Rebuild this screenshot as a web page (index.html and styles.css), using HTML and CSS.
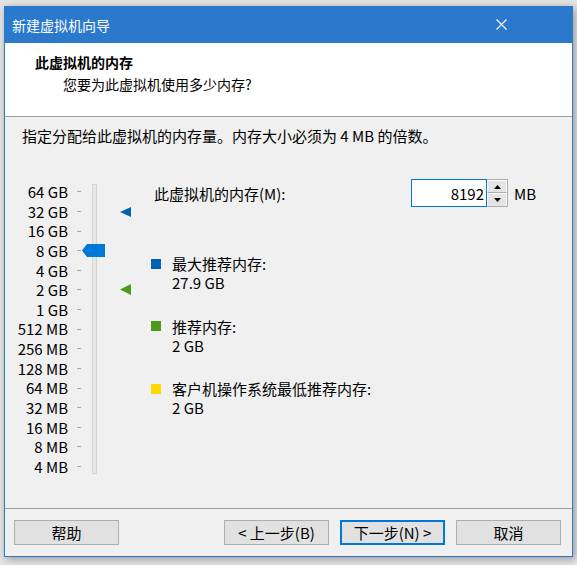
FILE: index.html
```html
<!DOCTYPE html>
<html lang="zh-CN">
<head>
  <meta charset="UTF-8">
  <title>新建虚拟机向导</title>
  <link rel="stylesheet" href="styles.css">
</head>
<body>
  <div class="window">
    <div class="titlebar">
      <span class="title">新建虚拟机向导</span>
      <svg class="close" width="11" height="11" viewBox="0 0 11 11">
        <path d="M0.5 0.5 L10.5 10.5 M10.5 0.5 L0.5 10.5" stroke="#fff" stroke-width="1.1" fill="none"/>
      </svg>
    </div>

    <div class="header">
      <div class="header-title">此虚拟机的内存</div>
      <div class="header-sub">您要为此虚拟机使用多少内存?</div>
    </div>

    <div class="content">
      <p class="intro">指定分配给此虚拟机的内存量。内存大小必须为 4 MB 的倍数。</p>

      <div class="main">
        <div class="scale">
          <ul class="scale-labels">
            <li><span>64 GB</span><i class="tick"></i></li>
            <li><span>32 GB</span><i class="tick"></i></li>
            <li><span>16 GB</span><i class="tick"></i></li>
            <li><span>8 GB</span><i class="tick"></i></li>
            <li><span>4 GB</span><i class="tick"></i></li>
            <li><span>2 GB</span><i class="tick"></i></li>
            <li><span>1 GB</span><i class="tick"></i></li>
            <li><span>512 MB</span><i class="tick"></i></li>
            <li><span>256 MB</span><i class="tick"></i></li>
            <li><span>128 MB</span><i class="tick"></i></li>
            <li><span>64 MB</span><i class="tick"></i></li>
            <li><span>32 MB</span><i class="tick"></i></li>
            <li><span>16 MB</span><i class="tick"></i></li>
            <li><span>8 MB</span><i class="tick"></i></li>
            <li><span>4 MB</span><i class="tick"></i></li>
          </ul>
          <div class="track"></div>
          <svg class="thumb" width="23" height="13" viewBox="0 0 23 13">
            <polygon points="0,6.5 5,0 23,0 23,13 5,13" fill="#0078d7"/>
          </svg>
          <svg class="marker marker-max" width="11" height="10" viewBox="0 0 11 10">
            <polygon points="0,5 11,0 11,10" fill="#0063b1"/>
          </svg>
          <svg class="marker marker-rec" width="11" height="11" viewBox="0 0 11 11">
            <polygon points="0,5.5 11,0 11,11" fill="#4c9a1c"/>
          </svg>
        </div>

        <div class="settings">
          <div class="mem-row">
            <label class="mem-label">此虚拟机的内存(M):</label>
            <div class="spin">
              <input class="spin-input" type="text" value="8192">
              <div class="spin-buttons">
                <button class="spin-btn"><svg width="7" height="4" viewBox="0 0 7 4"><polygon points="0,4 3.5,0 7,4" fill="#000"/></svg></button>
                <button class="spin-btn"><svg width="7" height="4" viewBox="0 0 7 4"><polygon points="0,0 7,0 3.5,4" fill="#000"/></svg></button>
              </div>
            </div>
            <span class="unit">MB</span>
          </div>

          <div class="legend">
            <div class="legend-item">
              <i class="swatch swatch-max"></i>
              <div>最大推荐内存:<br>27.9 GB</div>
            </div>
            <div class="legend-item">
              <i class="swatch swatch-rec"></i>
              <div>推荐内存:<br>2 GB</div>
            </div>
            <div class="legend-item">
              <i class="swatch swatch-min"></i>
              <div>客户机操作系统最低推荐内存:<br>2 GB</div>
            </div>
          </div>
        </div>
      </div>
    </div>

    <div class="footer">
      <button class="btn">帮助</button>
      <div class="nav">
        <button class="btn">&lt; 上一步(B)</button>
        <button class="btn btn-default">下一步(N) &gt;</button>
        <button class="btn">取消</button>
      </div>
    </div>
  </div>
</body>
</html>
```

FILE: styles.css
```css
html, body {
  margin: 0;
  height: 100%;
}
body {
  background: #e4e4e4;
  font-family: "Noto Sans CJK SC", "Noto Sans", sans-serif;
  color: #000;
  overflow: hidden;
}
.window {
  margin: 6px 0 0 4px;
  width: 567px;
  height: 550px;
  border: 1px solid #2b79cd;
  border-top: none;
  background: #f0f0f0;
  display: flex;
  flex-direction: column;
  box-shadow: 2px 2px 8px rgba(0, 0, 0, 0.35);
}
.titlebar {
  height: 37px;
  background: #2b79cd;
  color: #fff;
  display: flex;
  align-items: center;
  justify-content: space-between;
  padding: 0 66px 0 8px;
  margin: 0 -1px;
  font-size: 14px;
}
.title {
  line-height: 20px;
}
.header {
  height: 74px;
  box-sizing: border-box;
  background: #fff;
  border-bottom: 1px solid #a0a0a0;
  padding: 9px 0 0 30px;
  font-size: 14px;
  line-height: 20px;
}
.header-title {
  font-weight: bold;
}
.header-sub {
  margin: 2px 0 0 28px;
}
.content {
  flex: 1;
  font-size: 15px;
}
.intro {
  margin: 9px 0 0 17px;
  line-height: 20px;
}
.main {
  display: flex;
  margin-top: 33px;
}
.scale {
  position: relative;
  width: 146px;
  padding-top: 3px;
}
.scale-labels {
  list-style: none;
  margin: 0;
  padding: 0;
}
.scale-labels li {
  display: flex;
  align-items: center;
  height: 19.64px;
}
.scale-labels span {
  width: 63px;
  text-align: right;
  line-height: 19.64px;
}
.tick {
  width: 4px;
  height: 1px;
  margin-left: 9px;
  background: #a8a8a8;
}
.track {
  position: absolute;
  left: 87px;
  top: 5px;
  width: 3px;
  height: 288px;
  background: #e7e7e7;
  border: 1px solid #d6d6d6;
}
.thumb {
  position: absolute;
  left: 77px;
  top: 65px;
}
.marker {
  position: absolute;
  left: 115px;
}
.marker-max {
  top: 28px;
}
.marker-rec {
  top: 105px;
}
.settings {
  flex: 1;
}
.mem-row {
  display: flex;
  align-items: center;
  height: 28px;
}
.mem-label {
  width: 257px;
  padding-left: 3px;
}
.spin {
  display: flex;
  height: 28px;
}
.spin-input {
  width: 76px;
  height: 28px;
  box-sizing: border-box;
  border: 1px solid #0078d7;
  padding: 0 2px 0 0;
  text-align: right;
  font: inherit;
  font-size: 15px;
  outline: none;
}
.spin-buttons {
  display: flex;
  flex-direction: column;
  width: 21px;
  border: 1px solid #adadad;
  box-sizing: border-box;
  border-left: none;
}
.spin-btn {
  flex: 1;
  margin: 0;
  padding: 0;
  border: 1px solid #fff;
  border-bottom: 1px solid #adadad;
  background: #e5e5e5;
  display: flex;
  align-items: center;
  justify-content: center;
}
.spin-btn:last-child {
  border-bottom: 1px solid #e5e5e5;
}
.unit {
  margin-left: 6px;
}
.legend {
  margin-top: 47px;
}
.legend-item {
  display: flex;
  line-height: 19px;
  margin-bottom: 24.5px;
}
.swatch {
  width: 10px;
  height: 10px;
  margin: 4.5px 11px 0 0;
  flex: none;
}
.swatch-max {
  background: #0063b1;
}
.swatch-rec {
  background: #4c9a1c;
}
.swatch-min {
  background: #ffd800;
}
.footer {
  height: 48px;
  box-sizing: border-box;
  border-top: 1px solid #a0a0a0;
  padding: 11px 11px 0 9px;
  display: flex;
  justify-content: space-between;
  align-items: flex-start;
}
.nav {
  display: flex;
  gap: 11px;
}
.btn {
  width: 105px;
  height: 25px;
  margin: 0;
  padding: 0;
  background: #e1e1e1;
  border: 1px solid #adadad;
  font-family: inherit;
  font-size: 15px;
  line-height: 21px;
  color: #000;
}
.btn-default {
  border: 2px solid #0078d7;
}
```
